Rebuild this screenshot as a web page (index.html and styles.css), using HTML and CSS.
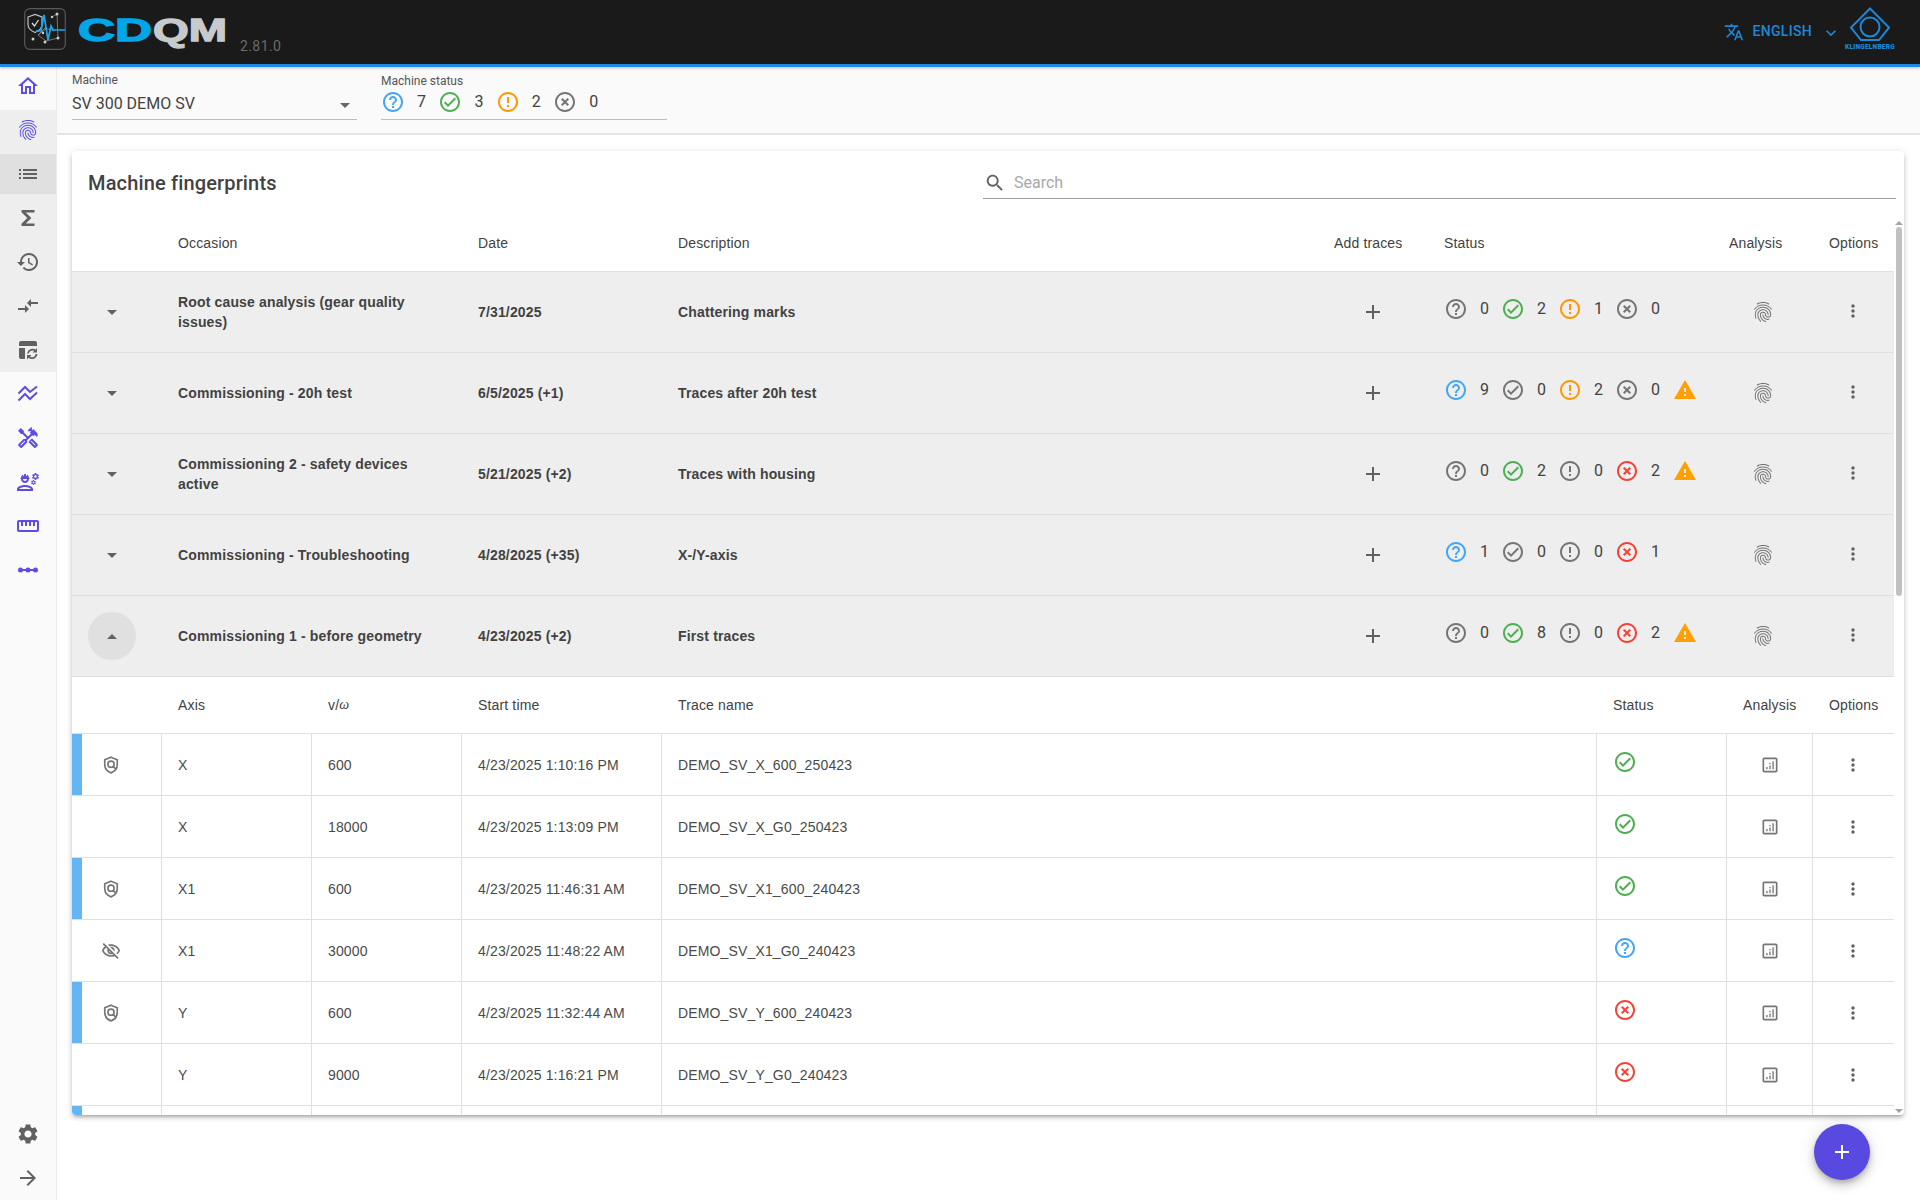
FILE: index.html
```html
<!DOCTYPE html>
<html lang="en">
<head>
<meta charset="utf-8">
<title>CDQM - Machine fingerprints</title>
<link rel="stylesheet" href="styles.css">
</head>
<body>
<svg class="defs" aria-hidden="true">
  <symbol id="i-help" viewBox="0 0 24 24"><path d="M11 18h2v-2h-2v2zm1-16C6.48 2 2 6.48 2 12s4.48 10 10 10 10-4.48 10-10S17.52 2 12 2zm0 18c-4.41 0-8-3.59-8-8s3.59-8 8-8 8 3.59 8 8-3.59 8-8 8zm0-14c-2.21 0-4 1.79-4 4h2c0-1.1.9-2 2-2s2 .9 2 2c0 2-3 1.75-3 5h2c0-2.25 3-2.5 3-5 0-2.21-1.79-4-4-4z"/></symbol>
  <symbol id="i-check" viewBox="0 0 24 24"><path d="M12 2C6.48 2 2 6.48 2 12s4.48 10 10 10 10-4.48 10-10S17.52 2 12 2zm0 18c-4.41 0-8-3.59-8-8s3.59-8 8-8 8 3.59 8 8-3.59 8-8 8zm4.59-12.42L10 14.17l-2.59-2.58L6 13l4 4 8-8z"/></symbol>
  <symbol id="i-error" viewBox="0 0 24 24"><path d="M11 15h2v2h-2zm0-8h2v6h-2zm.99-5C6.47 2 2 6.48 2 12s4.47 10 9.99 10C17.52 22 22 17.52 22 12S17.52 2 11.99 2zM12 20c-4.42 0-8-3.58-8-8s3.58-8 8-8 8 3.58 8 8-3.58 8-8 8z"/></symbol>
  <symbol id="i-off" viewBox="0 0 24 24"><path d="M14.59 8L12 10.59 9.41 8 8 9.41 10.59 12 8 14.59 9.41 16 12 13.41 14.59 16 16 14.59 13.41 12 16 9.41 14.59 8zM12 2C6.47 2 2 6.47 2 12s4.47 10 10 10 10-4.47 10-10S17.53 2 12 2zm0 18c-4.41 0-8-3.59-8-8s3.59-8 8-8 8 3.59 8 8-3.59 8-8 8z"/></symbol>
  <symbol id="i-warn" viewBox="0 0 24 24"><path d="M1 21h22L12 2 1 21zm12-3h-2v-2h2v2zm0-4h-2v-4h2v4z"/></symbol>
  <symbol id="i-finger" viewBox="0 0 24 24"><path d="M17.81 4.47c-.08 0-.16-.02-.23-.06C15.66 3.42 14 3 12.01 3c-1.98 0-3.86.47-5.57 1.41-.24.13-.54.04-.68-.2-.13-.24-.04-.55.2-.68C7.82 2.52 9.86 2 12.01 2c2.13 0 3.99.47 6.03 1.52.25.13.34.43.21.67-.09.18-.26.28-.44.28zM3.5 9.72c-.1 0-.2-.03-.29-.09-.23-.16-.28-.47-.12-.7.99-1.4 2.25-2.5 3.75-3.27C9.98 4.04 14 4.03 17.15 5.65c1.5.77 2.76 1.86 3.75 3.25.16.22.11.54-.12.7-.23.16-.54.11-.7-.12-.9-1.26-2.04-2.25-3.39-2.94-2.87-1.47-6.54-1.47-9.4.01-1.36.7-2.5 1.7-3.4 2.96-.08.14-.23.21-.39.21zm6.25 12.07c-.13 0-.26-.05-.35-.15-.87-.87-1.34-1.43-2.01-2.64-.69-1.23-1.05-2.73-1.05-4.34 0-2.97 2.54-5.39 5.66-5.39s5.66 2.42 5.66 5.39c0 .28-.22.5-.5.5s-.5-.22-.5-.5c0-2.42-2.09-4.39-4.66-4.39-2.57 0-4.66 1.97-4.66 4.39 0 1.44.32 2.77.93 3.85.64 1.15 1.08 1.64 1.85 2.42.19.2.19.51 0 .71-.11.1-.24.15-.37.15zm7.17-1.85c-1.19 0-2.24-.3-3.1-.89-1.49-1.01-2.38-2.65-2.38-4.39 0-.28.22-.5.5-.5s.5.22.5.5c0 1.41.72 2.74 1.94 3.56.71.48 1.54.71 2.54.71.24 0 .64-.03 1.04-.1.27-.05.53.13.58.41.05.27-.13.53-.41.58-.57.11-1.07.12-1.21.12zM14.91 22c-.04 0-.09-.01-.13-.02-1.59-.44-2.63-1.03-3.72-2.1-1.4-1.39-2.17-3.24-2.17-5.22 0-1.62 1.38-2.94 3.08-2.94 1.7 0 3.08 1.32 3.08 2.94 0 1.07.93 1.94 2.08 1.94s2.08-.87 2.08-1.94c0-3.77-3.25-6.83-7.25-6.83-2.84 0-5.44 1.58-6.61 4.03-.39.81-.59 1.76-.59 2.8 0 .78.07 2.01.67 3.61.1.26-.03.55-.29.64-.26.1-.55-.04-.64-.29-.49-1.31-.73-2.61-.73-3.96 0-1.2.23-2.29.68-3.24 1.33-2.79 4.28-4.6 7.51-4.6 4.55 0 8.25 3.51 8.25 7.83 0 1.62-1.38 2.94-3.08 2.94s-3.08-1.32-3.08-2.94c0-1.07-.93-1.94-2.08-1.94s-2.08.87-2.08 1.94c0 1.71.66 3.31 1.87 4.51.95.94 1.86 1.46 3.27 1.85.27.07.42.35.35.61-.05.23-.26.38-.47.38z"/></symbol>
  <symbol id="i-add" viewBox="0 0 24 24"><path d="M19 13h-6v6h-2v-6H5v-2h6V5h2v6h6v2z"/></symbol>
  <symbol id="i-vert" viewBox="0 0 24 24"><path d="M12 8c1.1 0 2-.9 2-2s-.9-2-2-2-2 .9-2 2 .9 2 2 2zm0 2c-1.1 0-2 .9-2 2s.9 2 2 2 2-.9 2-2-.9-2-2-2zm0 6c-1.1 0-2 .9-2 2s.9 2 2 2 2-.9 2-2-.9-2-2-2z"/></symbol>
  <symbol id="i-analytics" viewBox="0 0 24 24"><path d="M19 3H5c-1.1 0-2 .9-2 2v14c0 1.1.9 2 2 2h14c1.1 0 2-.9 2-2V5c0-1.1-.9-2-2-2zm0 16H5V5h14v14z"/><path d="M7.5 14.5h1.6V17H7.500zM11.200 12.500h1.600V17h-1.600zM14.900 7.500h1.600V17h-1.600zM11.200 9.500h1.600v1.600h-1.600z"/></symbol>
  <symbol id="i-shield" viewBox="0 0 24 24"><g fill="none" stroke="currentColor" stroke-width="2"><path d="M12 2.700l7.500 3v5.500c0 4.700-3.100 8.800-7.500 10.200-4.400-1.400-7.500-5.500-7.500-10.200V5.700z"/><circle cx="12" cy="11" r="3.700"/><path d="M14.600 13.700l3.200 3.300"/></g></symbol>
  <symbol id="i-eyeoff" viewBox="0 0 24 24"><path d="M12 6c3.790 0 7.170 2.130 8.820 5.500-.59 1.220-1.420 2.270-2.410 3.120l1.410 1.410c1.390-1.230 2.490-2.770 3.180-4.530C21.270 7.110 17 4 12 4c-1.270 0-2.490.2-3.640.57l1.650 1.650C10.660 6.090 11.320 6 12 6zm-1.070 1.140L13 9.210c.57.25 1.030.71 1.280 1.280l2.070 2.070c.08-.34.14-.7.14-1.070C16.500 9.010 14.480 7 12 7c-.37 0-.72.05-1.070.14zM2.010 3.870l2.680 2.680C3.060 7.830 1.770 9.530 1 11.500 2.730 15.890 7 19 12 19c1.520 0 2.980-.29 4.320-.82l3.420 3.420 1.410-1.410L3.420 2.450 2.010 3.870zm7.500 7.500l2.610 2.610c-.04.01-.08.02-.12.02-1.380 0-2.500-1.120-2.500-2.500 0-.05.01-.08.01-.13zm-3.400-3.400l1.750 1.750c-.23.55-.36 1.150-.36 1.780 0 2.480 2.020 4.500 4.500 4.500.63 0 1.230-.13 1.770-.36l.98.98c-.88.24-1.800.38-2.750.38-3.790 0-7.170-2.130-8.820-5.500.7-1.430 1.720-2.610 2.930-3.530z"/></symbol>
</svg>

<header class="topbar">
  <div class="brand">
    <svg class="brand-mark" viewBox="0 0 42 42">
      <rect x="0.700" y="0.700" width="40.600" height="40.600" rx="5" fill="#1c1c1c" stroke="#55585c" stroke-width="1.200"/>
      <path d="M28 9l5-3 1 24-12 3-8-6 7-7 10 3M14 27l9-7" fill="none" stroke="#8b8f93" stroke-width="0.800"/>
      <circle cx="33" cy="6" r="1.500" fill="#ccc"/><circle cx="28" cy="9" r="1.200" fill="#ccc"/><circle cx="34" cy="30" r="1.500" fill="#ccc"/><circle cx="21" cy="34" r="1.500" fill="#ccc"/><circle cx="9" cy="31" r="1.500" fill="#ccc"/><circle cx="19" cy="25" r="1.200" fill="#ccc"/>
      <path d="M4 9l7-2.500 7 2.500v7c0 4-3 7-7 8.500-4-1.500-7-4.500-7-8.500z" fill="#1c1c1c" stroke="#bfc3c7" stroke-width="1.200"/>
      <path d="M8 15l2.500 3 4-6" fill="none" stroke="#e6e6e6" stroke-width="1.200"/>
      <path d="M12 23h5l3-16 4 25 3-14 2 4h12" fill="none" stroke="#1ea7e8" stroke-width="1.700"/>
    </svg>
    <svg class="brand-word" viewBox="0 0 156 46">
      <text class="word-cd" x="3" y="35" textLength="74" lengthAdjust="spacingAndGlyphs">CD</text>
      <text class="word-qm" x="78" y="35" textLength="74" lengthAdjust="spacingAndGlyphs">QM</text>
    </svg>
    <span class="version">2.81.0</span>
  </div>
  <div class="top-right">
    <svg class="i18n" viewBox="0 0 24 24"><path d="M12.870 15.070l-2.540-2.510.03-.03c1.740-1.940 2.980-4.170 3.710-6.530H17V4h-7V2H8v2H1v1.990h11.170C11.500 7.920 10.440 9.750 9 11.350 8.070 10.320 7.300 9.190 6.690 8h-2c.73 1.630 1.730 3.170 2.980 4.560l-5.090 5.020L4 19l5-5 3.110 3.110.76-2.040zM18.500 10h-2L12 22h2l1.120-3h4.750L21 22h2l-4.500-12zm-2.620 7l1.620-4.330L19.120 17h-3.240z"/></svg>
    <span class="lang">ENGLISH</span>
    <svg class="chev" viewBox="0 0 24 24"><path d="M16.590 8.590L12 13.170 7.410 8.590 6 10l6 6 6-6z"/></svg>
    <div class="kl">
      <svg class="kl-mark" viewBox="0 0 42 40"><path d="M21 1.500L40 20.500 30 33H12L2 20.500z" fill="none" stroke="#1e88d8" stroke-width="2"/><circle cx="21" cy="20" r="9.500" fill="none" stroke="#1e88d8" stroke-width="2"/></svg>
      <span class="kl-name">KLINGELNBERG</span>
    </div>
  </div>
</header>

<div class="shell">
  <nav class="sidebar">
    <a class="nav-item nav-home"><svg class="nav-icon accent" viewBox="0 0 24 24"><path d="M12 5.690l5 4.500V18h-2v-6H9v6H7v-7.810l5-4.500M12 3L2 12h3v8h6v-6h2v6h6v-8h3L12 3z"/></svg></a>
    <div class="nav-group">
      <a class="nav-item"><svg class="nav-icon accent"><use href="#i-finger"/></svg></a>
      <a class="nav-item nav-selected"><svg class="nav-icon" viewBox="0 0 24 24"><path d="M3 13h2v-2H3v2zm0 4h2v-2H3v2zm0-8h2V7H3v2zm4 4h14v-2H7v2zm0 4h14v-2H7v2zM7 7v2h14V7H7z"/></svg></a>
      <a class="nav-item"><svg class="nav-icon" viewBox="0 0 24 24"><path d="M18.500 6.500H9.800l5.500 5.500-5.500 5.500h8.700V20H5.500v-2.200l5.800-5.800-5.800-5.800V4h13z"/></svg></a>
      <a class="nav-item"><svg class="nav-icon" viewBox="0 0 24 24"><path d="M13 3c-4.970 0-9 4.030-9 9H1l3.890 3.890.07.14L9 12H6c0-3.870 3.130-7 7-7s7 3.130 7 7-3.130 7-7 7c-1.930 0-3.680-.79-4.940-2.060l-1.420 1.420C8.270 19.990 10.510 21 13 21c4.970 0 9-4.030 9-9s-4.030-9-9-9zm-1 5v5l4.280 2.540.72-1.210-3.500-2.080V8H12z"/></svg></a>
      <a class="nav-item"><svg class="nav-icon" viewBox="0 0 24 24"><path d="M9.010 14H2v2h7.010v3L13 15l-3.990-4v3zm5.980-1v-3H22V8h-7.010V5L11 9l3.990 4z"/></svg></a>
      <a class="nav-item"><svg class="nav-icon" viewBox="0 0 24 24"><path d="M3 5a2 2 0 0 1 2-2h14a2 2 0 0 1 2 2v3H3zM3 10h6v11H5a2 2 0 0 1-2-2z"/><path d="M12 15.500a4.500 4.500 0 0 1 7.500-2.700M20.500 16a4.500 4.500 0 0 1-7.500 3" fill="none" stroke="#616161" stroke-width="1.800"/><path d="M21 10v4.500h-4.500zM11 21.500V17h4.500z"/></svg></a>
    </div>
    <a class="nav-item"><svg class="nav-icon accent-line" viewBox="0 0 24 24"><path d="M2.500 11.500l6.500-6.500 5 5 7-5.500M2.500 18.500l6.500-6.500 5 5 7-6.500"/></svg></a>
    <a class="nav-item"><svg class="nav-icon accent" viewBox="0 0 24 24"><path d="M21.670 18.170l-5.300-5.300h-.99l-2.540 2.540v.99l5.300 5.300c.39.39 1.020.39 1.410 0l2.120-2.120c.39-.38.39-1.020 0-1.410zm-2.830 1.420l-4.240-4.240.71-.71 4.240 4.240-.71.71z"/><path d="M17.340 10.190l1.410-1.410 2.120 2.120c1.170-1.170 1.170-3.070 0-4.240l-3.540-3.540-1.410 1.410V1.710l-.7-.71-3.540 3.540.71.71h2.830l-1.410 1.410 1.060 1.060-2.890 2.890-4.130-4.130V5.060L4.830 2.040 2 4.870 5.030 7.900h1.410l4.130 4.130-.85.85H7.610l-5.300 5.300c-.39.39-.39 1.020 0 1.410l2.120 2.120c.39.39 1.020.39 1.410 0l5.300-5.300v-2.120l5.150-5.150 1.050 1.050zm-7.980 5.150l-4.240 4.240-.71-.71 4.240-4.240.71.710z"/></svg></a>
    <a class="nav-item"><svg class="nav-icon accent" viewBox="0 0 24 24"><path d="M9 15c-2.670 0-8 1.340-8 4v2h16v-2c0-2.660-5.330-4-8-4zm-6 4c.22-.72 3.310-2 6-2 2.700 0 5.800 1.290 6 2H3zM4.740 9H5c0 2.210 1.790 4 4 4s4-1.790 4-4h.26c.27 0 .49-.22.49-.49v-.02c0-.27-.22-.49-.49-.49H13c0-1.480-.81-2.750-2-3.450v.95c0 .28-.22.5-.5.5s-.5-.22-.5-.5V4.140C9.680 4.060 9.350 4 9 4s-.68.06-1 .14V5.500c0 .28-.22.5-.5.5S7 5.780 7 5.500v-.95C5.810 5.250 5 6.520 5 8h-.26c-.27 0-.49.22-.49.49v.03c0 .26.22.48.49.48zM11 9c0 1.100-.9 2-2 2s-2-.9-2-2h4z"/><path d="M21.980 6.230l.93-.83-.75-1.300-1.190.39c-.14-.11-.3-.2-.47-.27L20.250 3h-1.500l-.25 1.220c-.17.07-.33.16-.48.27l-1.180-.39-.75 1.300.93.83c-.02.17-.02.35 0 .52l-.93.85.75 1.300 1.200-.38c.13.1.28.18.43.25l.28 1.230h1.500l.27-1.220c.16-.07.3-.15.44-.25l1.190.38.75-1.300-.93-.85c.03-.19.02-.36.01-.53zM19.500 7.750c-.69 0-1.250-.56-1.250-1.250s.56-1.250 1.250-1.250 1.250.56 1.250 1.250-.56 1.250-1.250 1.250z"/><path d="M19.400 10.790l-.85.28c-.1-.08-.21-.14-.33-.19L18.040 10h-1.070l-.18.87c-.12.05-.24.12-.34.19l-.84-.28-.54.93.66.59c-.01.13-.01.25 0 .37l-.66.61.54.93.86-.27c.1.07.2.13.31.18l.18.88h1.070l.19-.87c.11-.05.22-.11.32-.18l.85.27.54-.93-.66-.61c.01-.13.01-.25 0-.37l.66-.59-.54-.93zM17.500 13.390c-.49 0-.89-.4-.89-.89 0-.49.4-.89.89-.89s.89.4.89.89c0 .49-.4.89-.89.89z"/></svg></a>
    <a class="nav-item"><svg class="nav-icon accent" viewBox="0 0 24 24"><path d="M21 6H3c-1.100 0-2 .9-2 2v8c0 1.100.9 2 2 2h18c1.100 0 2-.9 2-2V8c0-1.100-.9-2-2-2zm0 10H3V8h2v4h2V8h2v4h2V8h2v4h2V8h2v4h2V8h2v8z"/></svg></a>
    <a class="nav-item"><svg class="nav-icon accent" viewBox="0 0 24 24"><path d="M4 11h16v2H4z"/><circle cx="4.500" cy="12" r="2.500"/><circle cx="12" cy="12" r="2.500"/><circle cx="19.500" cy="12" r="2.500"/></svg></a>
    <div class="nav-bottom">
      <a class="nav-item"><svg class="nav-icon" viewBox="0 0 24 24"><path d="M19.140 12.940c.04-.3.06-.61.06-.94 0-.32-.02-.64-.07-.94l2.030-1.580c.18-.14.23-.41.12-.61l-1.920-3.320c-.12-.22-.37-.29-.59-.22l-2.390.96c-.5-.38-1.030-.7-1.620-.94l-.36-2.540c-.04-.24-.24-.41-.48-.41h-3.840c-.24 0-.43.17-.47.41l-.36 2.540c-.59.24-1.130.57-1.620.94l-2.390-.96c-.22-.08-.47 0-.59.22L2.740 8.870c-.12.21-.08.47.12.61l2.030 1.580c-.05.3-.09.63-.09.94s.02.64.07.94l-2.030 1.580c-.18.14-.23.41-.12.61l1.920 3.320c.12.22.37.29.59.22l2.390-.96c.5.38 1.030.7 1.620.94l.36 2.540c.05.24.24.41.48.41h3.840c.24 0 .44-.17.47-.41l.36-2.540c.59-.24 1.130-.56 1.620-.94l2.390.96c.22.08.47 0 .59-.22l1.920-3.320c.12-.22.07-.47-.12-.61l-2.010-1.580zM12 15.600c-1.980 0-3.600-1.620-3.600-3.600s1.620-3.600 3.600-3.600 3.600 1.620 3.600 3.600-1.620 3.600-3.600 3.600z"/></svg></a>
      <a class="nav-item"><svg class="nav-icon" viewBox="0 0 24 24"><path d="M12 4l-1.410 1.410L16.170 11H4v2h12.170l-5.580 5.590L12 20l8-8z"/></svg></a>
    </div>
  </nav>

  <main class="main">
    <div class="toolbar">
      <div class="field field-machine">
        <label class="field-label">Machine</label>
        <div class="field-value">SV 300 DEMO SV<span class="drop"></span></div>
      </div>
      <div class="field field-status">
        <label class="field-label">Machine status</label>
        <div class="status-group">
          <span class="st"><svg class="blue"><use href="#i-help"/></svg>7</span>
          <span class="st"><svg class="green"><use href="#i-check"/></svg>3</span>
          <span class="st"><svg class="orange"><use href="#i-error"/></svg>2</span>
          <span class="st"><svg class="grey"><use href="#i-off"/></svg>0</span>
        </div>
      </div>
    </div>

    <div class="content">
      <section class="card">
        <div class="card-head">
          <h1 class="card-title">Machine fingerprints</h1>
          <div class="search">
            <svg viewBox="0 0 24 24"><path d="M15.500 14h-.79l-.28-.27C15.410 12.590 16 11.110 16 9.500 16 5.910 13.090 3 9.500 3S3 5.910 3 9.500 5.910 16 9.500 16c1.610 0 3.090-.59 4.230-1.570l.27.28v.79l5 4.990L20.490 19l-4.990-5zm-6 0C7.010 14 5 11.990 5 9.500S7.010 5 9.500 5 14 7.010 14 9.500 11.990 14 9.500 14z"/></svg>
            <span>Search</span>
          </div>
        </div>
        <div class="card-body">
          <div class="table">
            <div class="row-main row-head">
              <div></div><div>Occasion</div><div>Date</div><div>Description</div><div>Add traces</div><div>Status</div><div>Analysis</div><div>Options</div>
            </div>

            <div class="row-main">
              <div><span class="exp"><i class="tri-down"></i></span></div>
              <div class="strong">Root cause analysis (gear quality issues)</div>
              <div class="strong">7/31/2025</div>
              <div class="strong">Chattering marks</div>
              <div><svg class="ic-add"><use href="#i-add"/></svg></div>
              <div class="status-group row-status">
                <span class="st"><svg class="grey"><use href="#i-help"/></svg>0</span>
                <span class="st"><svg class="green"><use href="#i-check"/></svg>2</span>
                <span class="st"><svg class="orange"><use href="#i-error"/></svg>1</span>
                <span class="st"><svg class="grey"><use href="#i-off"/></svg>0</span>
              </div>
              <div><svg class="ic-fp"><use href="#i-finger"/></svg></div>
              <div><svg class="ic-more"><use href="#i-vert"/></svg></div>
            </div>

            <div class="row-main">
              <div><span class="exp"><i class="tri-down"></i></span></div>
              <div class="strong">Commissioning - 20h test</div>
              <div class="strong">6/5/2025 (+1)</div>
              <div class="strong">Traces after 20h test</div>
              <div><svg class="ic-add"><use href="#i-add"/></svg></div>
              <div class="status-group row-status">
                <span class="st"><svg class="blue"><use href="#i-help"/></svg>9</span>
                <span class="st"><svg class="grey"><use href="#i-check"/></svg>0</span>
                <span class="st"><svg class="orange"><use href="#i-error"/></svg>2</span>
                <span class="st"><svg class="grey"><use href="#i-off"/></svg>0</span>
                <svg class="amber"><use href="#i-warn"/></svg>
              </div>
              <div><svg class="ic-fp"><use href="#i-finger"/></svg></div>
              <div><svg class="ic-more"><use href="#i-vert"/></svg></div>
            </div>

            <div class="row-main">
              <div><span class="exp"><i class="tri-down"></i></span></div>
              <div class="strong">Commissioning 2 - safety devices active</div>
              <div class="strong">5/21/2025 (+2)</div>
              <div class="strong">Traces with housing</div>
              <div><svg class="ic-add"><use href="#i-add"/></svg></div>
              <div class="status-group row-status">
                <span class="st"><svg class="grey"><use href="#i-help"/></svg>0</span>
                <span class="st"><svg class="green"><use href="#i-check"/></svg>2</span>
                <span class="st"><svg class="grey"><use href="#i-error"/></svg>0</span>
                <span class="st"><svg class="red"><use href="#i-off"/></svg>2</span>
                <svg class="amber"><use href="#i-warn"/></svg>
              </div>
              <div><svg class="ic-fp"><use href="#i-finger"/></svg></div>
              <div><svg class="ic-more"><use href="#i-vert"/></svg></div>
            </div>

            <div class="row-main">
              <div><span class="exp"><i class="tri-down"></i></span></div>
              <div class="strong">Commissioning - Troubleshooting</div>
              <div class="strong">4/28/2025 (+35)</div>
              <div class="strong">X-/Y-axis</div>
              <div><svg class="ic-add"><use href="#i-add"/></svg></div>
              <div class="status-group row-status">
                <span class="st"><svg class="blue"><use href="#i-help"/></svg>1</span>
                <span class="st"><svg class="grey"><use href="#i-check"/></svg>0</span>
                <span class="st"><svg class="grey"><use href="#i-error"/></svg>0</span>
                <span class="st"><svg class="red"><use href="#i-off"/></svg>1</span>
              </div>
              <div><svg class="ic-fp"><use href="#i-finger"/></svg></div>
              <div><svg class="ic-more"><use href="#i-vert"/></svg></div>
            </div>

            <div class="row-main">
              <div><span class="exp exp-open"><i class="tri-up"></i></span></div>
              <div class="strong">Commissioning 1 - before geometry</div>
              <div class="strong">4/23/2025 (+2)</div>
              <div class="strong">First traces</div>
              <div><svg class="ic-add"><use href="#i-add"/></svg></div>
              <div class="status-group row-status">
                <span class="st"><svg class="grey"><use href="#i-help"/></svg>0</span>
                <span class="st"><svg class="green"><use href="#i-check"/></svg>8</span>
                <span class="st"><svg class="grey"><use href="#i-error"/></svg>0</span>
                <span class="st"><svg class="red"><use href="#i-off"/></svg>2</span>
                <svg class="amber"><use href="#i-warn"/></svg>
              </div>
              <div><svg class="ic-fp"><use href="#i-finger"/></svg></div>
              <div><svg class="ic-more"><use href="#i-vert"/></svg></div>
            </div>

            <div class="row-sub sub-head">
              <div></div><div>Axis</div><div>v/<em class="omega">ω</em></div><div>Start time</div><div>Trace name</div><div>Status</div><div>Analysis</div><div>Options</div>
            </div>

            <div class="row-sub">
              <div class="marker marker-on"><svg class="ic-shield"><use href="#i-shield"/></svg></div>
              <div>X</div><div>600</div><div>4/23/2025 1:10:16 PM</div><div>DEMO_SV_X_600_250423</div>
              <div><svg class="ic-st green"><use href="#i-check"/></svg></div>
              <div class="cell-c"><svg class="ic-an"><use href="#i-analytics"/></svg></div>
              <div class="cell-o"><svg class="ic-more"><use href="#i-vert"/></svg></div>
            </div>
            <div class="row-sub">
              <div class="marker"></div>
              <div>X</div><div>18000</div><div>4/23/2025 1:13:09 PM</div><div>DEMO_SV_X_G0_250423</div>
              <div><svg class="ic-st green"><use href="#i-check"/></svg></div>
              <div class="cell-c"><svg class="ic-an"><use href="#i-analytics"/></svg></div>
              <div class="cell-o"><svg class="ic-more"><use href="#i-vert"/></svg></div>
            </div>
            <div class="row-sub">
              <div class="marker marker-on"><svg class="ic-shield"><use href="#i-shield"/></svg></div>
              <div>X1</div><div>600</div><div>4/23/2025 11:46:31 AM</div><div>DEMO_SV_X1_600_240423</div>
              <div><svg class="ic-st green"><use href="#i-check"/></svg></div>
              <div class="cell-c"><svg class="ic-an"><use href="#i-analytics"/></svg></div>
              <div class="cell-o"><svg class="ic-more"><use href="#i-vert"/></svg></div>
            </div>
            <div class="row-sub">
              <div class="marker"><svg class="ic-eye"><use href="#i-eyeoff"/></svg></div>
              <div>X1</div><div>30000</div><div>4/23/2025 11:48:22 AM</div><div>DEMO_SV_X1_G0_240423</div>
              <div><svg class="ic-st blue"><use href="#i-help"/></svg></div>
              <div class="cell-c"><svg class="ic-an"><use href="#i-analytics"/></svg></div>
              <div class="cell-o"><svg class="ic-more"><use href="#i-vert"/></svg></div>
            </div>
            <div class="row-sub">
              <div class="marker marker-on"><svg class="ic-shield"><use href="#i-shield"/></svg></div>
              <div>Y</div><div>600</div><div>4/23/2025 11:32:44 AM</div><div>DEMO_SV_Y_600_240423</div>
              <div><svg class="ic-st red"><use href="#i-off"/></svg></div>
              <div class="cell-c"><svg class="ic-an"><use href="#i-analytics"/></svg></div>
              <div class="cell-o"><svg class="ic-more"><use href="#i-vert"/></svg></div>
            </div>
            <div class="row-sub">
              <div class="marker"></div>
              <div>Y</div><div>9000</div><div>4/23/2025 1:16:21 PM</div><div>DEMO_SV_Y_G0_240423</div>
              <div><svg class="ic-st red"><use href="#i-off"/></svg></div>
              <div class="cell-c"><svg class="ic-an"><use href="#i-analytics"/></svg></div>
              <div class="cell-o"><svg class="ic-more"><use href="#i-vert"/></svg></div>
            </div>
            <div class="row-sub">
              <div class="marker marker-on"></div>
              <div></div><div></div><div></div><div></div><div></div><div></div><div></div>
            </div>
          </div>
          <div class="scrollbar">
            <span class="sb-up"></span>
            <span class="sb-thumb"></span>
            <span class="sb-down"></span>
          </div>
        </div>
      </section>
      <button class="fab" type="button"><svg viewBox="0 0 24 24"><use href="#i-add"/></svg></button>
    </div>
  </main>
</div>
</body>
</html>
```

FILE: styles.css
```css
* { box-sizing: border-box; }
html, body { margin: 0; height: 100%; }
body {
  height: 1200px;
  overflow: hidden;
  display: flex;
  flex-direction: column;
  font-family: Roboto, "Liberation Sans", sans-serif;
  color: #424242;
  background: #fff;
}
.defs { position: absolute; width: 0; height: 0; }
svg { display: block; fill: currentColor; }

.blue { color: #42a5f5; }
.green { color: #4caf50; }
.orange { color: #ff9800; }
.grey { color: #757575; }
.red { color: #f44336; }
.amber { color: #ffa000; }

/* top bar */
.topbar {
  flex: 0 0 67px;
  height: 67px;
  background: #1a1a1a;
  border-bottom: 3px solid #1e88e5;
  display: flex;
  align-items: flex-start;
  justify-content: space-between;
  box-shadow: 0 1px 3px rgba(0,0,0,.25);
  position: relative;
  z-index: 2;
}
.brand { display: flex; align-items: flex-start; padding: 8px 0 0 24px; }
.brand-mark { width: 42px; height: 42px; }
.brand-word { width: 156px; height: 46px; margin: -2px 0 0 9px; flex: none; }
.word-cd, .word-qm { font-family: "Liberation Sans", sans-serif; font-weight: 700; font-size: 32px; stroke-width: 1.300; }
.word-cd { fill: #00a6e8; stroke: #00a6e8; }
.word-qm { fill: #c6cacd; stroke: #c6cacd; }
.version { font-size: 14px; color: #6b6b6b; margin: 30px 0 0 9px; line-height: 16px; letter-spacing: .4px; }
.top-right { display: flex; align-items: flex-start; color: #1e88d8; }
.i18n { width: 20px; height: 20px; margin: 22px 0 0 0; }
.lang { font-size: 14px; font-weight: 500; line-height: 20px; margin: 21px 0 0 9px; letter-spacing: .3px; }
.chev { width: 20px; height: 20px; margin: 23px 0 0 9px; }
.kl { width: 64px; margin: 7px 18px 0 -3px; display: flex; flex-direction: column; align-items: center; }
.kl-mark { width: 42px; height: 40px; display: block; margin-top: 0; }
.kl-name { font-size: 6.500px; font-weight: 900; line-height: 7px; margin-top: -3px; letter-spacing: .25px; white-space: nowrap; }

/* shell */
.shell { flex: 1; display: flex; min-height: 0; }
.sidebar {
  flex: 0 0 57px;
  width: 57px;
  background: #fafafa;
  border-right: 1px solid #ececec;
  display: flex;
  flex-direction: column;
  gap: 4px;
  padding-bottom: 2px;
}
.nav-item { display: flex; align-items: center; justify-content: center; height: 40px; flex: none; color: #616161; }
.nav-home { height: 39px; padding-bottom: 2px; }
.nav-icon { width: 24px; height: 24px; }
.accent { color: #5c4ee5; }
.accent-line { fill: none; stroke: #5c4ee5; stroke-width: 2; }
.nav-group { background: #eeeeee; display: flex; flex-direction: column; gap: 4px; margin-bottom: -2px; padding-bottom: 2px; flex: none; }
.nav-selected { background: #e0e0e0; }
.nav-bottom { margin-top: auto; display: flex; flex-direction: column; gap: 4px; }

/* main */
.main { flex: 1; min-width: 0; display: flex; flex-direction: column; }
.toolbar {
  flex: 0 0 68px;
  background: #fafafa;
  border-bottom: 2px solid #e5e5e5;
  display: flex;
  gap: 24px;
  padding: 5px 0 0 15px;
}
.field { display: flex; flex-direction: column; height: 48px; border-bottom: 1px solid #bdbdbd; }
.field-machine { width: 285px; }
.field-status { width: 286px; padding-top: 1px; }
.field-label { font-size: 12px; line-height: 16px; color: #555; }
.field-value { font-size: 16px; line-height: 24px; margin-top: 4px; position: relative; display: flex; justify-content: space-between; align-items: center; }
.drop { width: 0; height: 0; border: 5px solid transparent; border-top-color: #666; border-bottom: 0; margin-right: 7px; margin-top: 3px; }
.status-group { display: flex; font-size: 16px; line-height: 24px; }
.field-status .status-group { margin-top: 1px; }
.st { display: flex; width: 57px; gap: 12px; flex: none; }
.field-status .st { width: 57.400px; }
.st svg, .amber { width: 24px; height: 24px; flex: none; }
.row-status .amber { margin-left: 1px; }

.content { flex: 1; min-height: 0; padding: 16px 16px 0 15px; position: relative; }
.card {
  height: 964px;
  background: #fff;
  border-radius: 4px;
  box-shadow: 0 3px 3px -2px rgba(0,0,0,.2), 0 3px 4px 0 rgba(0,0,0,.14), 0 1px 8px 0 rgba(0,0,0,.12);
  display: flex;
  flex-direction: column;
  overflow: hidden;
}
.card-head { flex: 0 0 69px; display: flex; justify-content: space-between; align-items: flex-start; padding: 0 8px 0 16px; }
.card-title { font-size: 20px; font-weight: 500; line-height: 28px; margin: 18px 0 0; color: #424242; letter-spacing: .15px; }
.search {
  width: 913px;
  height: 34px;
  margin-top: 14px;
  padding-top: 2px;
  border-bottom: 1px solid #9e9e9e;
  display: flex;
  align-items: center;
  gap: 8px;
  padding-left: 1px;
  font-size: 16px;
  color: #a8a8a8;
}
.search svg { width: 22px; height: 22px; color: #616161; }

.card-body { flex: 1; min-height: 0; display: flex; }
.table { width: 1822px; flex: none; overflow: hidden; font-size: 14px; font-family: "Liberation Sans", Arial, sans-serif; letter-spacing: .15px; }

.row-main {
  display: grid;
  grid-template-columns: 106px 300px 200px 656px 110px 285px 100px 65px;
  height: 81px;
  background: #eeeeee;
  border-bottom: 1px solid #e0e0e0;
  align-items: center;
}
.row-head { height: 52px; background: #fff; padding-bottom: 5px; }
.strong { font-weight: 700; line-height: 20px; padding-right: 40px; }
.exp { display: flex; align-items: center; justify-content: center; width: 48px; height: 48px; border-radius: 50%; margin-left: 16px; }
.exp-open { background: #e0e0e0; }
.tri-down, .tri-up { width: 0; height: 0; border-left: 5px solid transparent; border-right: 5px solid transparent; }
.tri-down { border-top: 5px solid #616161; }
.tri-up { border-bottom: 5px solid #616161; }
.ic-add { width: 24px; height: 24px; margin-left: 27px; color: #616161; }
.row-status { margin-top: -6px; font-family: Roboto, sans-serif; letter-spacing: 0; }
.ic-fp { width: 24px; height: 24px; margin-left: 22px; color: #757575; }
.ic-more { width: 20px; height: 20px; margin: 0 0 2px 14px; color: #616161; }

.row-sub {
  display: grid;
  grid-template-columns: 89px 150px 150px 200px 935px 130px 86px 82px;
  height: 62px;
  border-bottom: 1px solid #e0e0e0;
  background: #fff;
  color: #4a4a4a;
  font-size: 14px;
}
.row-sub > div { display: flex; align-items: center; padding-left: 16px; border-left: 1px solid #e0e0e0; min-width: 0; }
.row-sub > div:first-child { border-left: 0; padding-left: 0; }
.sub-head { height: 57px; color: #424242; }
.sub-head > div { border-left-color: transparent; }
.omega { font-family: "Liberation Serif", serif; font-size: 14px; }
.marker { position: relative; }
.row-sub > .marker { padding-left: 0; justify-content: flex-start; }
.marker-on::before { content: ""; position: absolute; left: 0; top: 0; bottom: 0; width: 10px; background: #64b5f6; }
.ic-shield { width: 20px; height: 20px; margin: 1px 0 0 29px; color: #757575; }
.ic-eye { width: 20px; height: 20px; margin-left: 29px; color: #757575; }
.ic-st { width: 24px; height: 24px; margin-bottom: 6px; }
.ic-an { width: 20px; height: 20px; margin-left: 17px; color: #757575; }
.row-sub .cell-o .ic-more { margin: 0 0 0 14px; }
.row-sub .cell-c, .row-sub .cell-o { padding-left: 16px; }

/* fake scrollbar */
.scrollbar { flex: 1; display: flex; flex-direction: column; align-items: center; padding-top: 1px; }
.sb-up, .sb-down { width: 0; height: 0; border-left: 4px solid transparent; border-right: 4px solid transparent; flex: none; }
.sb-up { border-bottom: 4px solid #a3a3a3; }
.sb-down { border-top: 4px solid #a3a3a3; margin-top: auto; margin-bottom: 2px; }
.sb-thumb { width: 6px; height: 369px; background: #c1c1c1; border-radius: 3px; margin-top: 2px; flex: none; }

.fab {
  position: absolute;
  left: 1757px;
  top: 989px;
  width: 56px;
  height: 56px;
  padding: 16px;
  border: 0;
  border-radius: 50%;
  background: #5849e0;
  color: #fff;
  box-shadow: 0 3px 5px -1px rgba(0,0,0,.2), 0 6px 10px 0 rgba(0,0,0,.14), 0 1px 18px 0 rgba(0,0,0,.12);
}
.fab svg { width: 24px; height: 24px; }
```
